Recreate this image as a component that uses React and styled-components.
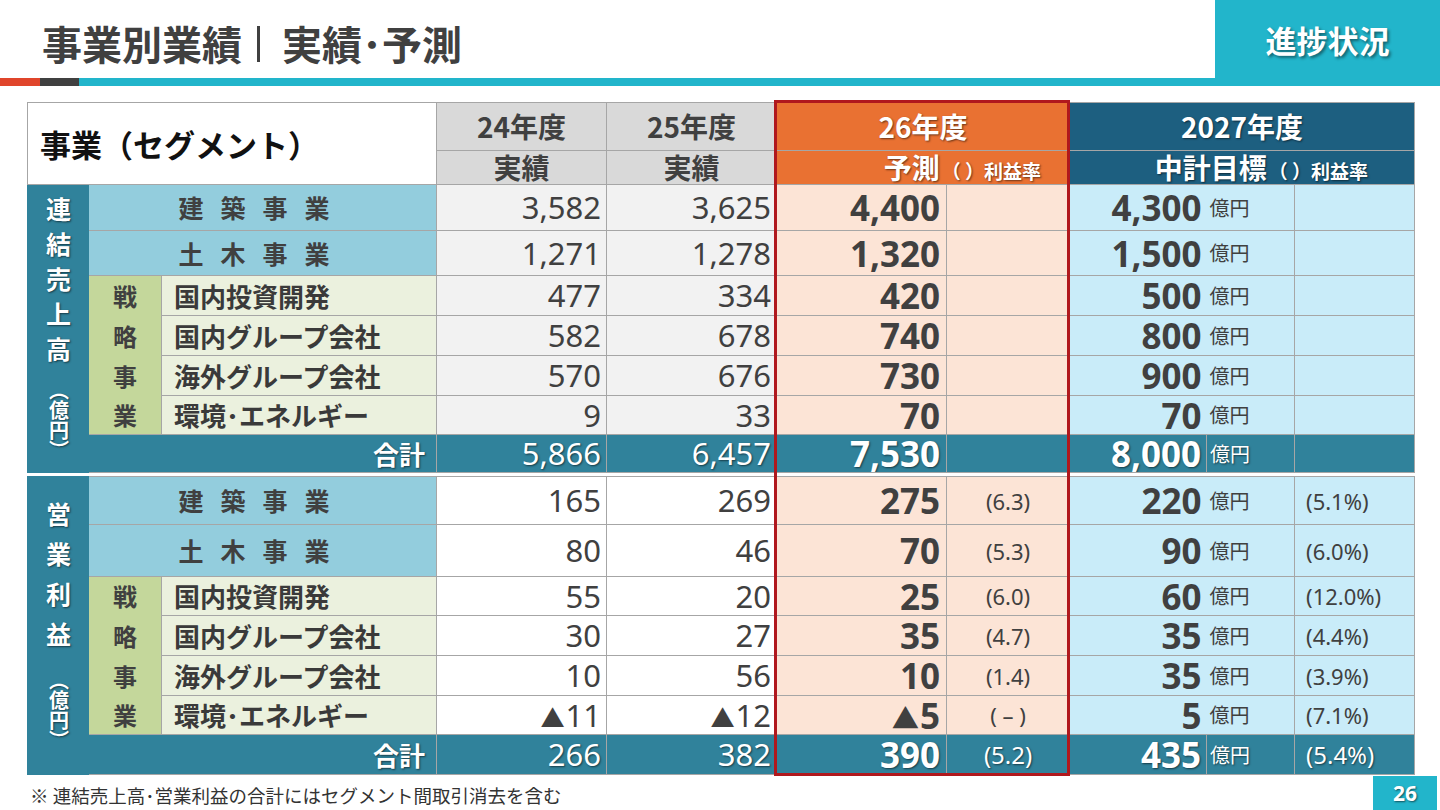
import React from "react";
import styled, { createGlobalStyle } from "styled-components";

const JP = `"Noto Sans CJK JP", sans-serif`;
const NUM = `"Noto Sans", "Noto Sans CJK JP", sans-serif`;
const shadow = "1px 1px 2px rgba(0, 0, 0, 0.55)";

const GlobalStyle = createGlobalStyle`
  html, body {
    margin: 0;
    padding: 0;
    background: #fff;
  }
  body {
    font-family: ${JP};
    color: #404040;
  }
`;

const Page = styled.div`
  width: 1440px;
  height: 810px;
  display: flex;
  flex-direction: column;
  overflow: hidden;
  background: #fff;
  & > * {
    flex-shrink: 0;
  }
`;

const Header = styled.header`
  display: flex;
  height: 78px;
`;

const Title = styled.h1`
  flex: 1;
  margin: 0;
  padding: 8px 0 0 42px;
  display: flex;
  align-items: center;
  font: 700 40px/1 ${JP};
  color: #404040;
`;

const TitleBar = styled.span`
  display: inline-block;
  width: 3px;
  height: 36px;
  margin: 2px 22px 0 15px;
  background: #404040;
`;

const Tag = styled.div`
  width: 225px;
  background: #22b5cb;
  display: flex;
  align-items: center;
  justify-content: center;
  font: 700 31px/1 ${JP};
  color: #fff;
  text-shadow: 2px 2px 3px rgba(0, 0, 0, 0.45);
`;

const Rule = styled.div`
  display: flex;
  height: 8px;
`;

const RuleSeg = styled.div`
  flex: ${(p) => (p.$w ? `0 0 ${p.$w}px` : "1")};
  background: ${(p) => p.$c};
`;

const TableWrap = styled.div`
  position: relative;
  width: 1387px;
  margin: 16px 0 0 27px;
`;

const Table = styled.table`
  width: 1387px;
  border-collapse: collapse;
  table-layout: fixed;
`;

const Highlight = styled.div`
  position: absolute;
  left: 747px;
  top: -2px;
  width: 296px;
  height: 676px;
  border: 3px solid #b0181d;
  box-sizing: border-box;
  pointer-events: none;
`;

const Td = styled.td`
  padding: 0;
  border: 1px solid #a6a6a6;
  vertical-align: middle;
  white-space: nowrap;
  overflow: hidden;
`;

const Corner = styled(Td)`
  background: #fff;
  text-align: left;
  padding-left: 12px;
  font: 700 31px/1 ${JP};
  color: #111;
`;

const YearHead = styled(Td)`
  background: #d9d9d9;
  text-align: center;
  font: 700 28px/1.1 ${JP};
  color: #404040;
`;

const ColoredHead = styled(Td)`
  background: ${(p) => p.$bg};
  text-align: ${(p) => p.$align || "center"};
  padding-right: ${(p) => p.$pr || 0}px;
  font: 700 ${(p) => p.$size || 28}px/1.1 ${JP};
  color: #fff;
  text-shadow: ${shadow};
`;

const Small = styled.span`
  font-size: 19px;
  margin-left: 2px;
`;

const GroupCell = styled(Td)`
  background: #30829b;
  border-color: #30829b;
`;

const VText = styled.div`
  writing-mode: vertical-rl;
  margin: 0 auto;
  font: 700 25px/1 ${JP};
  color: #fff;
  letter-spacing: ${(p) => p.$gap}px;
  text-shadow: ${shadow};
`;

const VUnit = styled.span`
  font-size: 20px;
  letter-spacing: 0;
  display: inline-block;
  margin-top: 8px;
`;

const MajorName = styled(Td)`
  background: #93cddd;
  text-align: center;
  font: 700 25px/1 ${JP};
  letter-spacing: 17px;
  color: #404040;
`;

const StrategyChar = styled(Td)`
  background: #c4d79b;
  border-top: none;
  border-bottom: none;
  text-align: center;
  font: 700 24px/1 ${JP};
  color: #404040;
`;

const SubName = styled(Td)`
  background: #ebf1de;
  text-align: left;
  padding-left: 12px;
  font: 700 26px/1 ${JP};
  color: #3a3a3a;
`;

const ActualCell = styled(Td)`
  background: ${(p) => (p.$total ? "#30829b" : p.$shaded ? "#f2f2f2" : "#fff")};
  text-align: right;
  padding-right: 5px;
  font: 400 31px/1 ${NUM};
  color: ${(p) => (p.$total ? "#fff" : "#404040")};
  text-shadow: ${(p) => (p.$total ? shadow : "none")};
`;

const ForecastCell = styled(Td)`
  background: ${(p) => (p.$total ? "#30829b" : "#fce4d6")};
  text-align: right;
  padding-right: 6px;
  font: 700 35px/1 ${NUM};
  color: ${(p) => (p.$total ? "#fff" : "#404040")};
  text-shadow: ${(p) => (p.$total ? shadow : "none")};
`;

const RatioCell = styled(Td)`
  background: ${(p) => (p.$total ? "#30829b" : "#fce4d6")};
  text-align: ${(p) => (p.$left ? "left" : "center")};
  padding-left: ${(p) => (p.$left ? 11 : 0)}px;
  font: 400 ${(p) => (p.$total ? 24 : 22)}px/1 ${NUM};
  color: ${(p) => (p.$total ? "#fff" : "#404040")};
  text-shadow: ${(p) => (p.$total ? shadow : "none")};
`;

const TargetCell = styled(Td)`
  background: ${(p) => (p.$total ? "#30829b" : "#c9ecf9")};
  border-right: ${(p) => (p.$total ? "1px solid #a6a6a6" : "none")};
  text-align: right;
  padding-right: 5px;
  font: 700 35px/1 ${NUM};
  color: ${(p) => (p.$total ? "#fff" : "#404040")};
  text-shadow: ${(p) => (p.$total ? shadow : "none")};
`;

const UnitCell = styled(Td)`
  background: ${(p) => (p.$total ? "#30829b" : "#c9ecf9")};
  border-left: ${(p) => (p.$total ? "1px solid #a6a6a6" : "none")};
  text-align: left;
  padding-left: 3px;
  font: 400 20px/1 ${JP};
  color: ${(p) => (p.$total ? "#fff" : "#404040")};
  text-shadow: ${(p) => (p.$total ? shadow : "none")};
`;

const TargetRatio = styled(RatioCell)`
  background: ${(p) => (p.$total ? "#30829b" : "#c9ecf9")};
`;

const TotalLabel = styled(Td)`
  background: #30829b;
  text-align: right;
  padding-right: 11px;
  font: 700 26px/1 ${JP};
  color: #fff;
  text-shadow: ${shadow};
`;

const SepCell = styled.td`
  padding: 0;
  border: none;
  background: #fff;
  line-height: 0;
  font-size: 0;
`;

const Tri = styled.span`
  font-size: 0.78em;
  margin-right: 1px;
`;

const Footer = styled.footer`
  flex: 1 0 auto;
  display: flex;
  justify-content: space-between;
  align-items: flex-end;
`;

const Note = styled.p`
  margin: 0 0 1px 30px;
  font: 400 18.5px/27px ${JP};
  color: #333;
`;

const PageNo = styled.div`
  width: 64px;
  height: 34px;
  margin-right: 3px;
  background: #22b5cb;
  display: flex;
  align-items: center;
  justify-content: center;
  font: 700 21px/1 ${NUM};
  color: #fff;
  text-shadow: ${shadow};
`;

const widths = [61, 73, 275, 170, 170, 170, 123, 137, 88, 120];

const sales = {
  label: "連結売上高",
  gap: 10,
  shaded: true,
  heights: [46, 45, 40, 40, 40, 39, 38],
  rows: [
    { name: "建築事業", major: true, a: "3,582", b: "3,625", f: "4,400", fr: "", t: "4,300", tr: "" },
    { name: "土木事業", major: true, a: "1,271", b: "1,278", f: "1,320", fr: "", t: "1,500", tr: "" },
    { name: "国内投資開発", a: "477", b: "334", f: "420", fr: "", t: "500", tr: "" },
    { name: "国内グループ会社", a: "582", b: "678", f: "740", fr: "", t: "800", tr: "" },
    { name: "海外グループ会社", a: "570", b: "676", f: "730", fr: "", t: "900", tr: "" },
    { name: "環境･エネルギー", a: "9", b: "33", f: "70", fr: "", t: "70", tr: "" },
  ],
  total: { a: "5,866", b: "6,457", f: "7,530", fr: "", t: "8,000", tr: "" },
};

const profit = {
  label: "営業利益",
  gap: 15,
  shaded: false,
  heights: [48, 52, 39, 40, 40, 39, 40],
  rows: [
    { name: "建築事業", major: true, a: "165", b: "269", f: "275", fr: "(6.3)", t: "220", tr: "(5.1%)" },
    { name: "土木事業", major: true, a: "80", b: "46", f: "70", fr: "(5.3)", t: "90", tr: "(6.0%)" },
    { name: "国内投資開発", a: "55", b: "20", f: "25", fr: "(6.0)", t: "60", tr: "(12.0%)" },
    { name: "国内グループ会社", a: "30", b: "27", f: "35", fr: "(4.7)", t: "35", tr: "(4.4%)" },
    { name: "海外グループ会社", a: "10", b: "56", f: "10", fr: "(1.4)", t: "35", tr: "(3.9%)" },
    { name: "環境･エネルギー", a: "▲11", b: "▲12", f: "▲5", fr: "( – )", t: "5", tr: "(7.1%)" },
  ],
  total: { a: "266", b: "382", f: "390", fr: "(5.2)", t: "435", tr: "(5.4%)" },
};

const strategy = ["戦", "略", "事", "業"];

// ▲ marks a negative value; the glyph is drawn a little smaller than the digits
const Num = ({ v }) =>
  v.startsWith("▲") ? (
    <>
      <Tri>▲</Tri>
      {v.slice(1)}
    </>
  ) : (
    v
  );

function Values({ row, shaded, total }) {
  return (
    <>
      <ActualCell $shaded={shaded} $total={total}><Num v={row.a} /></ActualCell>
      <ActualCell $shaded={shaded} $total={total}><Num v={row.b} /></ActualCell>
      <ForecastCell $total={total}><Num v={row.f} /></ForecastCell>
      <RatioCell $total={total}>{row.fr}</RatioCell>
      <TargetCell $total={total}><Num v={row.t} /></TargetCell>
      <UnitCell $total={total}>億円</UnitCell>
      <TargetRatio $left $total={total}>{row.tr}</TargetRatio>
    </>
  );
}

function Section({ data }) {
  let s = 0;
  return (
    <>
      {data.rows.map((row, i) => {
        const ch = row.major ? null : strategy[s++];
        return (
          <tr key={row.name} style={{ height: data.heights[i] }}>
            {i === 0 && (
              <GroupCell rowSpan={data.rows.length + 1}>
                <VText $gap={data.gap}>
                  {data.label}
                  <VUnit>（億円）</VUnit>
                </VText>
              </GroupCell>
            )}
            {row.major ? (
              <MajorName colSpan={2}>{row.name}</MajorName>
            ) : (
              <>
                <StrategyChar>{ch}</StrategyChar>
                <SubName>{row.name}</SubName>
              </>
            )}
            <Values row={row} shaded={data.shaded} />
          </tr>
        );
      })}
      <tr style={{ height: data.heights[data.rows.length] }}>
        <TotalLabel colSpan={2}>合計</TotalLabel>
        <Values row={data.total} total />
      </tr>
    </>
  );
}

export default function App() {
  return (
    <Page>
      <GlobalStyle />
      <Header>
        <Title>
          事業別業績<TitleBar />実績･予測
        </Title>
        <Tag>進捗状況</Tag>
      </Header>
      <Rule>
        <RuleSeg $w={40} $c="#e0452b" />
        <RuleSeg $w={39} $c="#404040" />
        <RuleSeg $c="#22b5cb" />
      </Rule>

      <TableWrap>
        <Table>
          <colgroup>
            {widths.map((w, i) => (
              <col key={i} style={{ width: w }} />
            ))}
          </colgroup>
          <tbody>
            <tr style={{ height: 48 }}>
              <Corner colSpan={3} rowSpan={2}>事業（セグメント）</Corner>
              <YearHead>24年度</YearHead>
              <YearHead>25年度</YearHead>
              <ColoredHead colSpan={2} $bg="#e97132">26年度</ColoredHead>
              <ColoredHead colSpan={3} $bg="#1d5f80">2027年度</ColoredHead>
            </tr>
            <tr style={{ height: 34 }}>
              <YearHead>実績</YearHead>
              <YearHead>実績</YearHead>
              <ColoredHead colSpan={2} $bg="#e97132" $align="right" $pr={28} $size={28}>
                予測<Small>（ ）利益率</Small>
              </ColoredHead>
              <ColoredHead colSpan={3} $bg="#1d5f80" $align="right" $pr={46} $size={28}>
                中計目標<Small>（ ）利益率</Small>
              </ColoredHead>
            </tr>
            <Section data={sales} />
            <tr style={{ height: 4 }}>
              <SepCell colSpan={10} />
            </tr>
            <Section data={profit} />
          </tbody>
        </Table>
        <Highlight />
      </TableWrap>

      <Footer>
        <Note>※ 連結売上高･営業利益の合計にはセグメント間取引消去を含む</Note>
        <PageNo>26</PageNo>
      </Footer>
    </Page>
  );
}
